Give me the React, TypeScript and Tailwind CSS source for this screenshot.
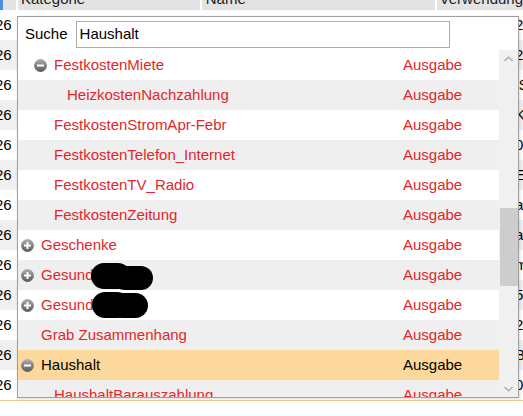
import React from "react";

type Item = {
  label: string;
  level: 0 | 1 | 2;
  toggle?: "plus" | "minus";
  selected?: boolean;
  redacted?: 1 | 2;
};

const items: Item[] = [
  { label: "FestkostenMiete", level: 1, toggle: "minus" },
  { label: "HeizkostenNachzahlung", level: 2 },
  { label: "FestkostenStromApr-Febr", level: 1 },
  { label: "FestkostenTelefon_Internet", level: 1 },
  { label: "FestkostenTV_Radio", level: 1 },
  { label: "FestkostenZeitung", level: 1 },
  { label: "Geschenke", level: 0, toggle: "plus" },
  { label: "Gesund", level: 0, toggle: "plus", redacted: 1 },
  { label: "Gesund", level: 0, toggle: "plus", redacted: 2 },
  { label: "Grab Zusammenhang", level: 0 },
  { label: "Haushalt", level: 0, toggle: "minus", selected: true },
  { label: "HaushaltBarauszahlung", level: 1 },
];

const indent = { 0: "pl-[3px]", 1: "pl-[16px]", 2: "pl-[29px]" };

const rightChars = ["2", "2", "I$", "K", "0", "E", "a", "a", "m", "5", "2", "B", "0"];

function ToggleIcon({ kind }: { kind: "plus" | "minus" }) {
  return (
    <svg width="13" height="13" viewBox="0 0 13 13" className="mr-[7px] shrink-0">
      <defs>
        <linearGradient id={`g-${kind}`} x1="0" y1="0" x2="0" y2="1">
          <stop offset="0" stopColor="#b0b0b0" />
          <stop offset="0.5" stopColor="#808080" />
          <stop offset="1" stopColor="#5c5c5c" />
        </linearGradient>
      </defs>
      <circle cx="6.5" cy="6.5" r="6.4" fill={`url(#g-${kind})`} />
      <rect x="3" y="5.5" width="7" height="2" fill="#fff" />
      {kind === "plus" && <rect x="5.5" y="3" width="2" height="7" fill="#fff" />}
    </svg>
  );
}

function Chevron({ up }: { up?: boolean }) {
  return (
    <svg width="9" height="6" viewBox="0 0 9 6">
      <path
        d={up ? "M0.5 5 L4.5 1 L8.5 5" : "M0.5 1 L4.5 5 L8.5 1"}
        fill="none"
        stroke="#a6a6a6"
        strokeWidth="1.2"
      />
    </svg>
  );
}

function Redaction({ which }: { which: 1 | 2 }) {
  return which === 1 ? (
    <>
      <div className="absolute left-[73px] top-[3px] h-[26px] w-[40px] rounded-full bg-black" />
      <div className="absolute left-[95px] top-[6px] h-[24px] w-[40px] rounded-full bg-black" />
    </>
  ) : (
    <>
      <div className="absolute left-[74px] top-[2px] h-[26px] w-[38px] rounded-full bg-black" />
      <div className="absolute left-[92px] top-[3px] h-[25px] w-[38px] rounded-full bg-black" />
    </>
  );
}

function ListRow({ item, index }: { item: Item; index: number }) {
  const bg = item.selected ? "bg-[#fdd89c]" : index % 2 === 0 ? "bg-white" : "bg-[#efefef]";
  const color = item.selected ? "text-black" : "text-[#e3262b]";
  return (
    <div className={`relative flex h-[30px] shrink-0 items-center pt-[1px] ${bg} ${color}`}>
      <div className={`flex flex-1 items-center ${indent[item.level]}`}>
        {item.toggle ? <ToggleIcon kind={item.toggle} /> : <span className="w-[20px] shrink-0" />}
        <span className="whitespace-nowrap">{item.label}</span>
      </div>
      <div className="w-[96px] shrink-0">Ausgabe</div>
      {item.redacted && <Redaction which={item.redacted} />}
    </div>
  );
}

export default function App() {
  return (
    <div className="relative h-[416px] w-[523px] overflow-hidden bg-white font-['Liberation_Sans',Arial,sans-serif] text-[15px]">
      {/* table behind the popup */}
      <div className="flex h-[10px] overflow-hidden bg-[#e3e3e3] text-[#222]">
        <div className="w-[3px] bg-[#4a90d9]" />
        <div className="w-[14px]" />
        <div className="w-[2px] bg-white" />
        <div className="-mt-[12px] w-[192px] pl-[3px]">Kategorie</div>
        <div className="w-[2px] bg-white" />
        <div className="-mt-[12px] w-[246px] pl-[4px]">Name</div>
        <div className="w-[2px] bg-white" />
        <div className="-mt-[12px] flex-1 pl-[3px]">Verwendung</div>
      </div>
      {rightChars.map((c, i) => (
        <div key={i} className={`flex h-[30px] items-center ${i % 2 === 0 ? "bg-white" : "bg-[#f0f0f0]"}`}>
          <div className="w-[17px] overflow-hidden whitespace-nowrap text-black">
            <span className="-ml-[5px] inline-block">26</span>
          </div>
          <div className="flex-1" />
          <div className="w-[8px] overflow-hidden whitespace-nowrap text-black">{c}</div>
        </div>
      ))}
      <div className="h-px bg-[#f3cf8f]" />

      {/* search popup */}
      <div className="absolute left-[17px] top-[16px] flex h-[382px] w-[502px] flex-col border border-[#a0a0a0] bg-white shadow-[1px_1px_3px_rgba(0,0,0,0.15)]">
        <div className="flex h-[33px] shrink-0 items-center pl-[7px] pt-[1px] text-black">
          <span>Suche</span>
          <div className="ml-[8px] flex h-[27px] w-[374px] items-center border border-[#acacac] pl-[3px]">
            Haushalt
          </div>
        </div>
        <div className="flex min-h-0 flex-1">
          <div className="flex min-w-0 flex-1 flex-col overflow-hidden">
            {items.map((item, i) => (
              <ListRow key={i} item={item} index={i} />
            ))}
          </div>
          <div className="flex w-[19px] shrink-0 flex-col items-center bg-[#f0f0f0]">
            <div className="flex h-[17px] items-center">
              <Chevron up />
            </div>
            <div className="h-[141px]" />
            <div className="h-[78px] w-[18px] bg-[#cdcdcd]" />
            <div className="flex-1" />
            <div className="flex h-[17px] items-center">
              <Chevron />
            </div>
          </div>
        </div>
      </div>
    </div>
  );
}
